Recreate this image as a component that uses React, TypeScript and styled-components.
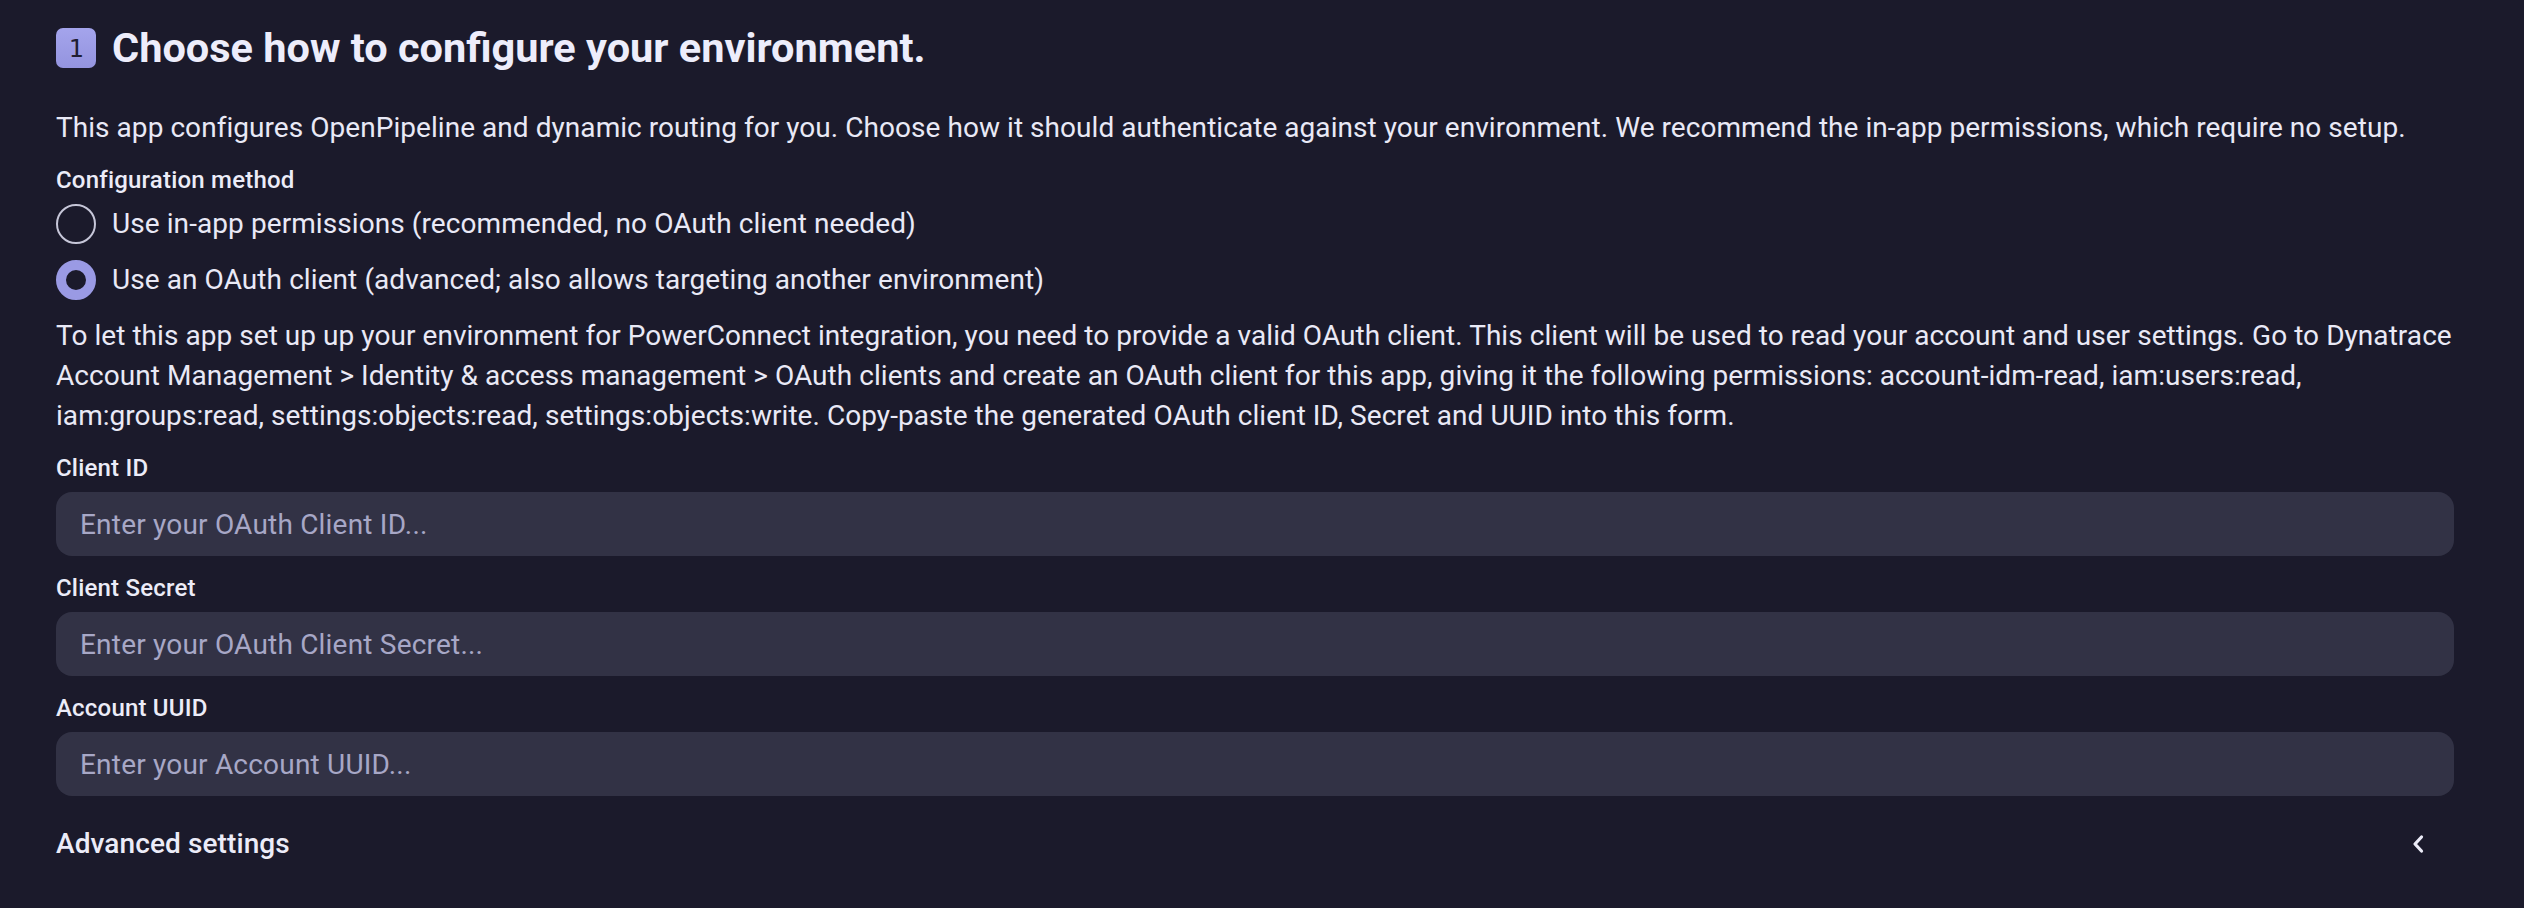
import React from "react";
import styled, { createGlobalStyle } from "styled-components";

const GlobalStyle = createGlobalStyle`
  html, body {
    margin: 0;
    padding: 0;
    background: #1b1a2b;
  }
  body {
    font-family: Roboto, "Noto Sans", "Liberation Sans", sans-serif;
    color: #ececf8;
  }
  * { box-sizing: border-box; }
`;

const Page = styled.main`
  min-height: 908px;
  background: #1b1a2b;
  padding: 24px 70px 0 56px;
  display: flex;
  flex-direction: column;
`;

const HeadingRow = styled.div`
  display: flex;
  align-items: center;
  gap: 16px;
  height: 48px;
`;

const StepBadge = styled.span`
  width: 40px;
  height: 40px;
  border-radius: 7px;
  background: linear-gradient(180deg, #a4a4ec 0%, #9494df 100%);
  color: #1f1e33;
  display: flex;
  align-items: center;
  justify-content: center;
  font-family: "DejaVu Sans Mono", "Liberation Mono", monospace;
  font-size: 25px;
  line-height: 1;
`;

const Heading = styled.h1`
  margin: 0;
  font-size: 41.5px;
  line-height: 48px;
  font-weight: 700;
  color: #ededfb;
`;

const Paragraph = styled.p<{ $top: number }>`
  margin: ${(p) => p.$top}px 0 0;
  font-size: 28px;
  line-height: 40px;
  letter-spacing: 0.05px;
  font-weight: 400;
  color: #e9e9f6;
`;

const FieldLabel = styled.label`
  display: block;
  margin-top: 16px;
  font-size: 24px;
  line-height: 32px;
  letter-spacing: 0.2px;
  font-weight: 500;
  color: #ececf8;
`;

const RadioGroup = styled.div`
  margin-top: 8px;
  display: flex;
  flex-direction: column;
  gap: 16px;
`;

const RadioRow = styled.label`
  display: flex;
  align-items: center;
  gap: 16px;
  height: 40px;
  font-size: 28px;
  line-height: 40px;
  letter-spacing: 0.08px;
  color: #e9e9f6;
  cursor: pointer;
`;

const RadioCircle = styled.span<{ $checked: boolean }>`
  width: 40px;
  height: 40px;
  flex: 0 0 40px;
  border-radius: 50%;
  border: ${(p) => (p.$checked ? "10px solid #9a9ae4" : "2px solid #c6c6d8")};
  background: #1b1a2b;
`;

const Field = styled.div`
  display: flex;
  flex-direction: column;
`;

const Input = styled.input`
  margin-top: 8px;
  height: 64px;
  width: 100%;
  border: none;
  outline: none;
  border-radius: 16px;
  background: #323245;
  padding: 0 24px;
  font-family: Roboto, "Noto Sans", sans-serif;
  font-size: 28px;
  letter-spacing: 0.2px;
  color: #ececf8;
  &::placeholder {
    color: #a7a7c6;
  }
`;

const AdvancedRow = styled.div`
  margin-top: 16px;
  padding: 12px 0;
  display: flex;
  align-items: center;
  justify-content: space-between;
`;

const AdvancedTitle = styled.span`
  font-size: 28px;
  line-height: 40px;
  letter-spacing: 0.1px;
  font-weight: 500;
  color: #ececf8;
`;

const ChevronBox = styled.span`
  width: 40px;
  height: 40px;
  margin-right: 16px;
  display: flex;
  align-items: center;
  justify-content: center;
  color: #ececf8;
`;

const Chevron = () => (
  <svg width="14" height="20" viewBox="0 0 14 20" fill="none">
    <path
      d="M10.5 3 L4 10 L10.5 17"
      stroke="currentColor"
      strokeWidth="3.2"
      strokeLinecap="round"
      strokeLinejoin="round"
    />
  </svg>
);

const fields = [
  { label: "Client ID", placeholder: "Enter your OAuth Client ID..." },
  { label: "Client Secret", placeholder: "Enter your OAuth Client Secret..." },
  { label: "Account UUID", placeholder: "Enter your Account UUID..." },
];

export default function App() {
  const [method, setMethod] = React.useState<"app" | "oauth">("oauth");
  return (
    <>
      <GlobalStyle />
      <Page>
        <HeadingRow>
          <StepBadge>1</StepBadge>
          <Heading>Choose how to configure your environment.</Heading>
        </HeadingRow>
        <Paragraph $top={36}>
          This app configures OpenPipeline and dynamic routing for you. Choose how it should
          authenticate against your environment. We recommend the in-app permissions, which
          require no setup.
        </Paragraph>
        <FieldLabel>Configuration method</FieldLabel>
        <RadioGroup>
          <RadioRow onClick={() => setMethod("app")}>
            <RadioCircle $checked={method === "app"} />
            Use in-app permissions (recommended, no OAuth client needed)
          </RadioRow>
          <RadioRow onClick={() => setMethod("oauth")}>
            <RadioCircle $checked={method === "oauth"} />
            Use an OAuth client (advanced; also allows targeting another environment)
          </RadioRow>
        </RadioGroup>
        <Paragraph $top={16}>
          To let this app set up up your environment for PowerConnect integration, you need to
          provide a valid OAuth client. This client will be used to read your account and user
          settings. Go to Dynatrace Account Management &gt; Identity &amp; access management &gt;
          OAuth clients and create an OAuth client for this app, giving it the following
          permissions: account-idm-read, iam:users:read, iam:groups:read,
          settings:objects:read, settings:objects:write. Copy-paste the generated OAuth client
          ID, Secret and UUID into this form.
        </Paragraph>
        {fields.map((f) => (
          <Field key={f.label}>
            <FieldLabel>{f.label}</FieldLabel>
            <Input placeholder={f.placeholder} />
          </Field>
        ))}
        <AdvancedRow>
          <AdvancedTitle>Advanced settings</AdvancedTitle>
          <ChevronBox>
            <Chevron />
          </ChevronBox>
        </AdvancedRow>
      </Page>
    </>
  );
}
